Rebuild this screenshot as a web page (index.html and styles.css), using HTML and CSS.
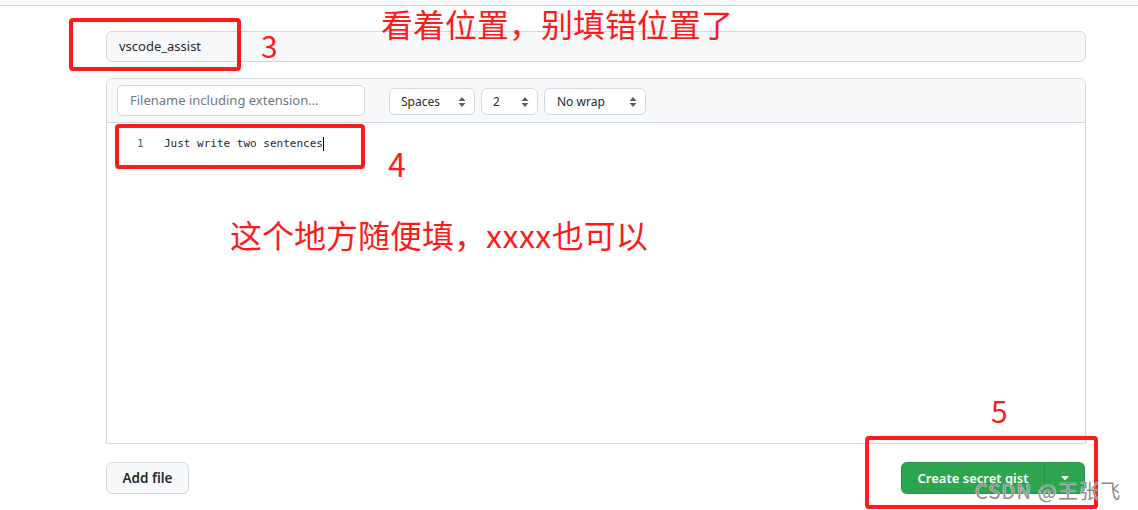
FILE: index.html
```html
<!DOCTYPE html>
<html lang="zh-CN">
<head>
<meta charset="utf-8">
<title>Gist</title>
<link rel="stylesheet" href="styles.css">
</head>
<body>
<div class="topbar"></div>
<main class="page">
  <div class="desc">vscode_assist</div>
  <section class="editor">
    <header class="editor-head">
      <div class="filename">Filename including extension…</div>
      <div class="selects">
        <div class="select w-spaces">Spaces<span class="arrows"><svg width="8" height="12" viewBox="0 0 8 12"><path d="M4 1 L7.5 5 H0.5 Z M4 11 L7.5 7 H0.5 Z" fill="#57606a"/></svg></span></div>
        <div class="select w-two">2<span class="arrows"><svg width="8" height="12" viewBox="0 0 8 12"><path d="M4 1 L7.5 5 H0.5 Z M4 11 L7.5 7 H0.5 Z" fill="#57606a"/></svg></span></div>
        <div class="select w-wrap">No wrap<span class="arrows"><svg width="8" height="12" viewBox="0 0 8 12"><path d="M4 1 L7.5 5 H0.5 Z M4 11 L7.5 7 H0.5 Z" fill="#57606a"/></svg></span></div>
      </div>
    </header>
    <div class="code">
      <div class="line"><span class="ln">1</span><span class="src">Just write two sentences</span><span class="caret"></span></div>
    </div>
  </section>
  <footer class="actions">
    <button class="btn">Add file</button>
    <div class="primary">
      <span class="primary-main">Create secret gist</span>
      <span class="primary-drop"><svg width="8" height="5" viewBox="0 0 8 5"><path d="M0 0 H8 L4 4.5 Z" fill="#fff"/></svg></span>
    </div>
  </footer>
</main>

<div class="mark box1"></div>
<div class="mark box2"></div>
<div class="mark box3"></div>
<div class="note n3">3</div>
<div class="note n4">4</div>
<div class="note n5">5</div>
<div class="note title">看着位置，别填错位置了</div>
<div class="note hint">这个地方随便填，<span class="xs">xxxx</span>也可以</div>
<div class="watermark">CSDN @王张飞</div>
</body>
</html>
```

FILE: styles.css
```css
* { box-sizing: border-box; }
html, body { margin: 0; padding: 0; background: #fff; }
body {
  width: 1138px;
  height: 510px;
  overflow: hidden;
  position: relative;
  font-family: "Noto Sans", "Open Sans", sans-serif;
  color: #24292f;
}
.topbar {
  height: 6px;
  background: #f6f8fa;
  border-bottom: 1px solid #d0d7de;
}
.page {
  margin-left: 106px;
  width: 980px;
  padding-top: 25px;
}
.desc {
  height: 31px;
  background: #f6f8fa;
  border: 1px solid #d0d7de;
  border-radius: 6px;
  font-size: 13px;
  line-height: 29px;
  padding-left: 12px;
  color: #24292f;
}
.editor {
  margin-top: 16px;
  height: 366px;
  border: 1px solid #d0d7de;
  border-top-left-radius: 6px;
  border-top-right-radius: 6px;
  display: flex;
  flex-direction: column;
}
.editor-head {
  height: 44px;
  background: #f6f8fa;
  border-bottom: 1px solid #d0d7de;
  border-top-left-radius: 6px;
  border-top-right-radius: 6px;
  display: flex;
  align-items: center;
  padding-left: 10px;
}
.filename {
  width: 248px;
  height: 31px;
  background: #fff;
  border: 1px solid #d0d7de;
  border-radius: 6px;
  font-size: 13px;
  line-height: 29px;
  padding-left: 12px;
  color: #6e7781;
}
.selects {
  display: flex;
  gap: 6px;
  margin-left: 24px;
  margin-top: 2px;
}
.select {
  height: 27px;
  background: #fff;
  border: 1px solid #d0d7de;
  border-radius: 6px;
  font-size: 12px;
  line-height: 25px;
  padding-left: 11px;
  padding-right: 8px;
  display: flex;
  justify-content: space-between;
  align-items: center;
  color: #24292f;
}
.arrows { display: flex; align-items: center; }
.w-spaces { width: 86px; }
.w-two { width: 57px; }
.w-wrap { width: 102px; padding-left: 12px; }
.code {
  flex: 1;
  background: #fff;
  padding-top: 13px;
}
.line {
  display: flex;
  align-items: center;
  font-family: "DejaVu Sans Mono", "Liberation Mono", monospace;
  font-size: 11px;
  height: 15px;
  color: #24292f;
}
.ln {
  padding-left: 30px;
  box-sizing: content-box;
  width: 7px;
  margin-right: 20px;
  color: #57606a;
}
.src { white-space: pre; }
.caret {
  display: inline-block;
  width: 1px;
  height: 14px;
  background: #000;
}
.actions {
  margin-top: 18px;
  display: flex;
  justify-content: space-between;
  align-items: center;
}
.btn {
  width: 83px;
  height: 32px;
  background: #f6f8fa;
  border: 1px solid #d0d7de;
  border-radius: 6px;
  font-family: "Noto Sans", "Open Sans", sans-serif;
  font-size: 13.5px;
  font-weight: 600;
  color: #24292f;
  padding: 0;
}
.primary {
  display: flex;
  height: 32px;
  width: 184px;
  margin-right: 1px;
  background: #2da44e;
  border: 1px solid rgba(27, 31, 36, 0.15);
  border-radius: 6px;
  color: #fff;
  font-size: 13px;
  font-weight: 600;
}
.primary-main {
  width: 143px;
  display: flex;
  align-items: center;
  justify-content: center;
  border-right: 1px solid rgba(27, 31, 36, 0.15);
}
.primary-drop {
  flex: 1;
  display: flex;
  align-items: center;
  justify-content: center;
}
.mark {
  position: absolute;
  border: 4px solid #ff1a1a;
  border-radius: 4px;
}
.box1 { left: 69px; top: 18px; width: 172px; height: 53px; }
.box2 { left: 115px; top: 124px; width: 250px; height: 45px; }
.box3 { left: 865px; top: 436px; width: 233px; height: 73px; }
.note {
  position: absolute;
  color: #ff1a1a;
  font-family: "Noto Sans CJK SC", "Noto Sans", sans-serif;
  white-space: nowrap;
  line-height: 1;
}
.n3 { left: 261px; top: 30px; font-size: 30px; }
.n4 { left: 388px; top: 147px; font-size: 32px; }
.n5 { left: 991px; top: 395px; font-size: 30px; }
.title { left: 381px; top: 7px; font-size: 32px; }
.hint { left: 230px; top: 218px; font-size: 32px; }
.xs { letter-spacing: 0.5px; }
.watermark {
  position: absolute;
  left: 975px;
  top: 481px;
  font-family: "Noto Sans CJK SC", "Noto Sans", sans-serif;
  font-size: 20px;
  letter-spacing: 1.2px;
  color: rgba(125, 125, 125, 0.9);
  text-shadow: 0 0 1px #fff, 0 0 1px #fff;
  line-height: 1;
  white-space: nowrap;
}
```
